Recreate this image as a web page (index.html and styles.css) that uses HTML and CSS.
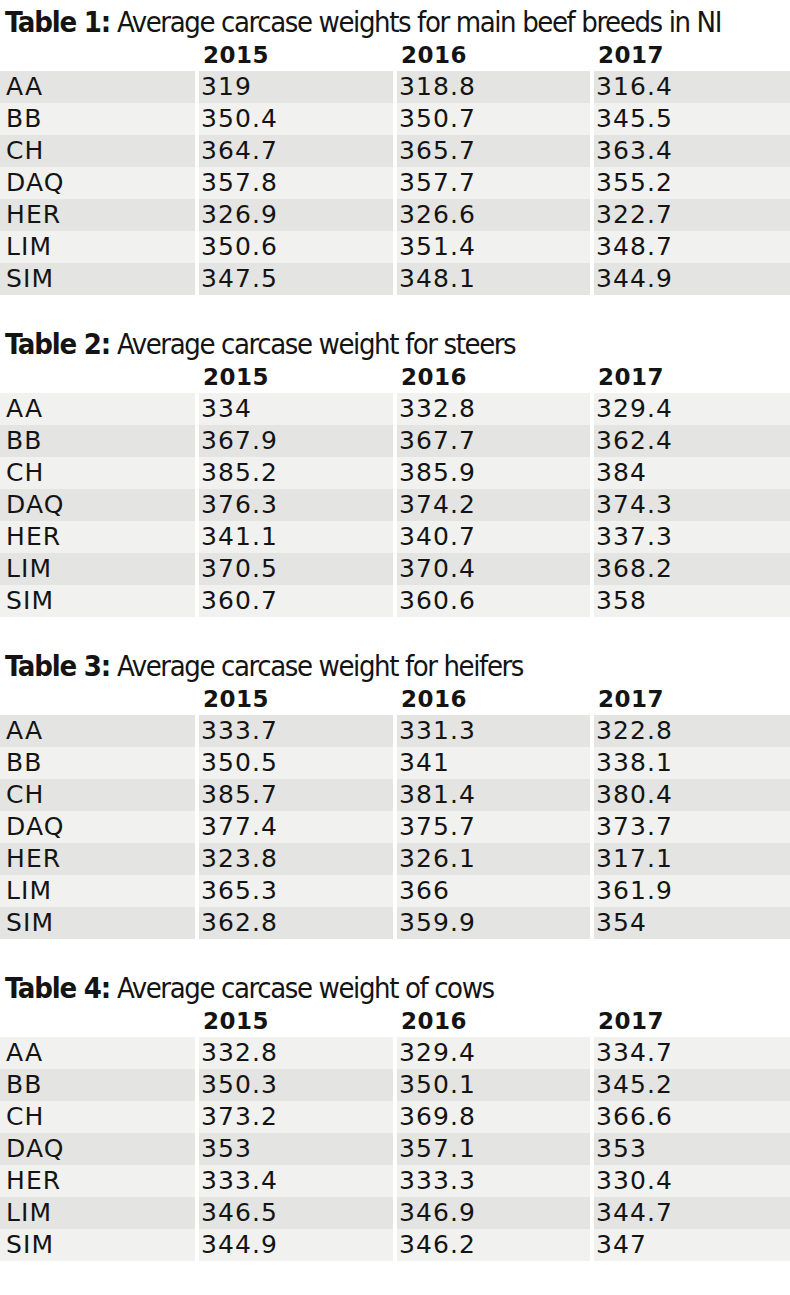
FILE: index.html
```html
<!DOCTYPE html>
<html lang="en">
<head>
<meta charset="utf-8">
<title>Average carcase weights</title>
<link rel="stylesheet" href="styles.css">
</head>
<body>
<section class="tbl">
  <h2 class="title"><b>Table 1:</b> Average carcase weights for main beef breeds in NI</h2>
  <div class="row head"><span></span><span>2015</span><span>2016</span><span>2017</span></div>
  <div class="row dark"><span>AA</span><span>319</span><span>318.8</span><span>316.4</span></div>
  <div class="row light"><span>BB</span><span>350.4</span><span>350.7</span><span>345.5</span></div>
  <div class="row dark"><span>CH</span><span>364.7</span><span>365.7</span><span>363.4</span></div>
  <div class="row light"><span>DAQ</span><span>357.8</span><span>357.7</span><span>355.2</span></div>
  <div class="row dark"><span>HER</span><span>326.9</span><span>326.6</span><span>322.7</span></div>
  <div class="row light"><span>LIM</span><span>350.6</span><span>351.4</span><span>348.7</span></div>
  <div class="row dark"><span>SIM</span><span>347.5</span><span>348.1</span><span>344.9</span></div>
</section>
<section class="tbl">
  <h2 class="title"><b>Table 2:</b> Average carcase weight for steers</h2>
  <div class="row head"><span></span><span>2015</span><span>2016</span><span>2017</span></div>
  <div class="row light"><span>AA</span><span>334</span><span>332.8</span><span>329.4</span></div>
  <div class="row dark"><span>BB</span><span>367.9</span><span>367.7</span><span>362.4</span></div>
  <div class="row light"><span>CH</span><span>385.2</span><span>385.9</span><span>384</span></div>
  <div class="row dark"><span>DAQ</span><span>376.3</span><span>374.2</span><span>374.3</span></div>
  <div class="row light"><span>HER</span><span>341.1</span><span>340.7</span><span>337.3</span></div>
  <div class="row dark"><span>LIM</span><span>370.5</span><span>370.4</span><span>368.2</span></div>
  <div class="row light"><span>SIM</span><span>360.7</span><span>360.6</span><span>358</span></div>
</section>
<section class="tbl">
  <h2 class="title"><b>Table 3:</b> Average carcase weight for heifers</h2>
  <div class="row head"><span></span><span>2015</span><span>2016</span><span>2017</span></div>
  <div class="row dark"><span>AA</span><span>333.7</span><span>331.3</span><span>322.8</span></div>
  <div class="row light"><span>BB</span><span>350.5</span><span>341</span><span>338.1</span></div>
  <div class="row dark"><span>CH</span><span>385.7</span><span>381.4</span><span>380.4</span></div>
  <div class="row light"><span>DAQ</span><span>377.4</span><span>375.7</span><span>373.7</span></div>
  <div class="row dark"><span>HER</span><span>323.8</span><span>326.1</span><span>317.1</span></div>
  <div class="row light"><span>LIM</span><span>365.3</span><span>366</span><span>361.9</span></div>
  <div class="row dark"><span>SIM</span><span>362.8</span><span>359.9</span><span>354</span></div>
</section>
<section class="tbl">
  <h2 class="title"><b>Table 4:</b> Average carcase weight of cows</h2>
  <div class="row head"><span></span><span>2015</span><span>2016</span><span>2017</span></div>
  <div class="row light"><span>AA</span><span>332.8</span><span>329.4</span><span>334.7</span></div>
  <div class="row dark"><span>BB</span><span>350.3</span><span>350.1</span><span>345.2</span></div>
  <div class="row light"><span>CH</span><span>373.2</span><span>369.8</span><span>366.6</span></div>
  <div class="row dark"><span>DAQ</span><span>353</span><span>357.1</span><span>353</span></div>
  <div class="row light"><span>HER</span><span>333.4</span><span>333.3</span><span>330.4</span></div>
  <div class="row dark"><span>LIM</span><span>346.5</span><span>346.9</span><span>344.7</span></div>
  <div class="row light"><span>SIM</span><span>344.9</span><span>346.2</span><span>347</span></div>
</section>
</body>
</html>
```
FILE: styles.css
```css
html, body {
  margin: 0;
  padding: 0;
  background: #ffffff;
}

body {
  width: 790px;
  color: #141414;
  font-family: "DejaVu Sans", "Noto Sans", sans-serif;
}

.tbl {
  display: flex;
  flex-direction: column;
  margin-bottom: 27px;
}

.title {
  margin: 0;
  height: 40px;
  padding-top: 5px;
  padding-left: 5px;
  box-sizing: border-box;
  font-family: "Liberation Sans Narrow", "DejaVu Sans Condensed", "DejaVu Sans", sans-serif;
  font-stretch: condensed;
  font-size: 29px;
  line-height: 35px;
  font-weight: 400;
  letter-spacing: -1.4px;
  white-space: nowrap;
}

.title b {
  font-weight: 700;
  letter-spacing: -1.2px;
}

.row {
  display: grid;
  grid-template-columns: 195px 194px 193px 1fr;
  column-gap: 4px;
  height: 32px;
}

.row span {
  display: flex;
  align-items: center;
  padding-left: 2px;
  font-size: 25px;
  line-height: 32px;
  letter-spacing: 1.1px;
}

.row span:first-child {
  padding-left: 6px;
}

.head {
  height: 31px;
}

.head span {
  font-weight: 700;
  font-size: 23px;
  line-height: 31px;
  padding-left: 4px;
  letter-spacing: 0.5px;
}

.dark span {
  background: #e4e4e3;
}

.light span {
  background: #f1f1f0;
}
```
